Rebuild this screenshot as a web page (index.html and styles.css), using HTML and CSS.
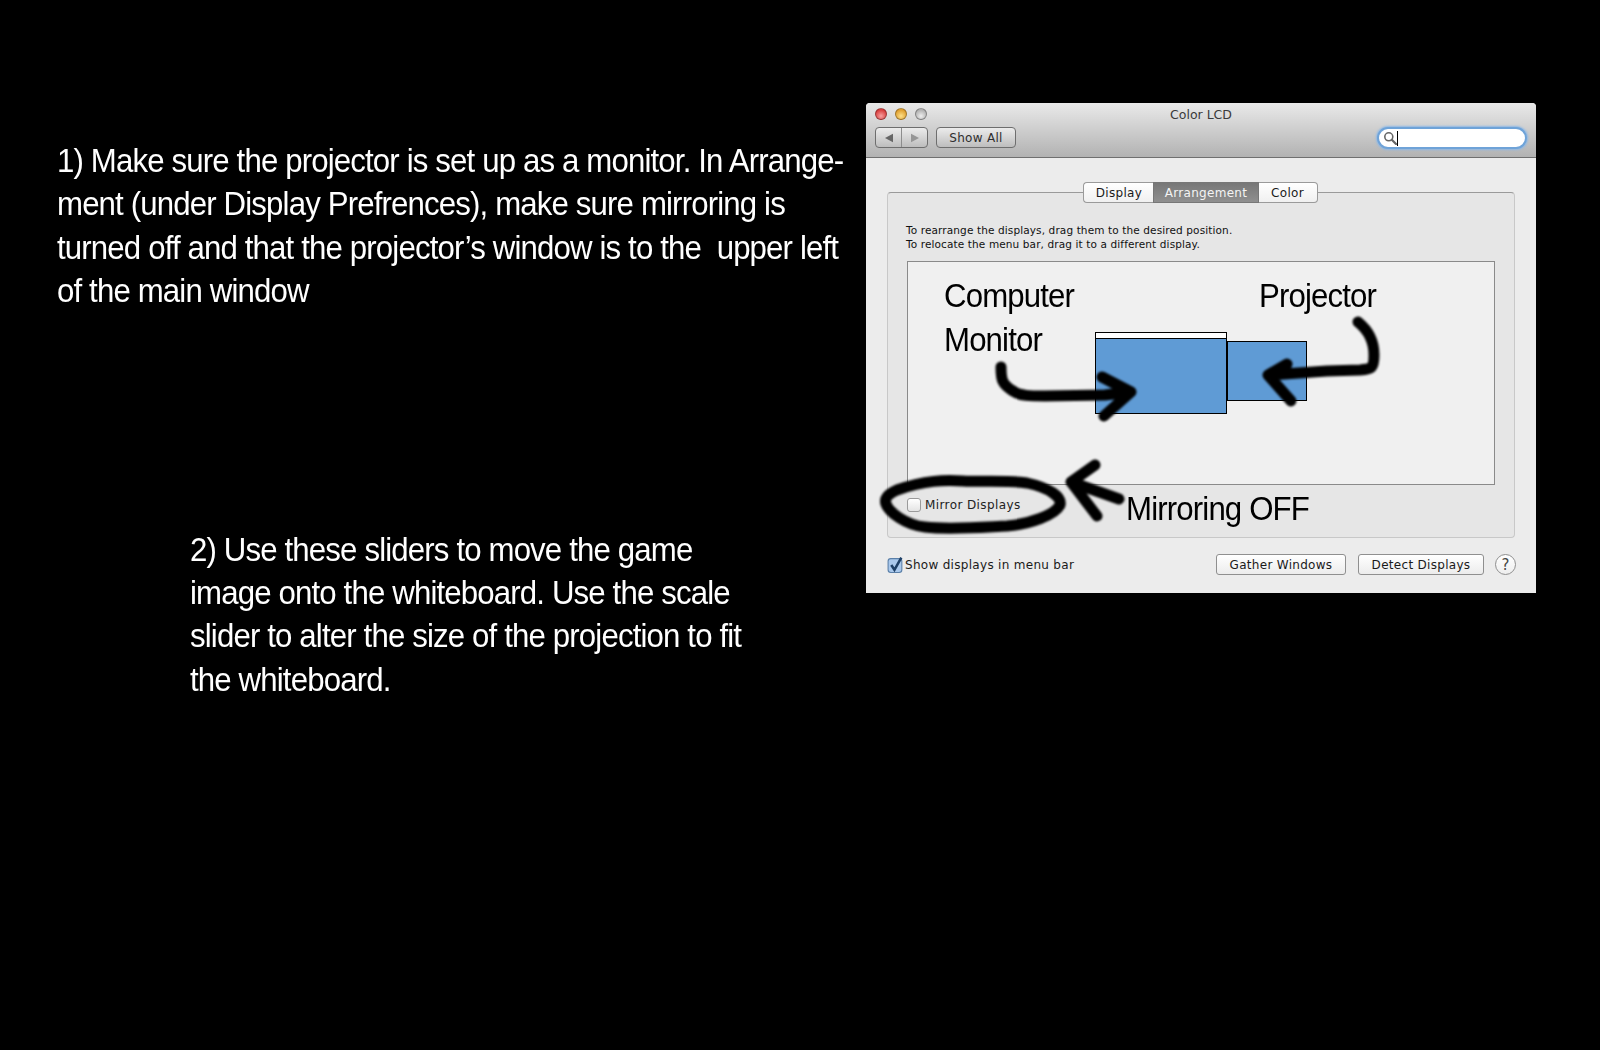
FILE: index.html
```html
<!DOCTYPE html>
<html lang="en">
<head>
<meta charset="utf-8">
<title>Projector setup</title>
<link rel="stylesheet" href="styles.css">
</head>
<body>
<main class="slide">
  <section class="notes">
    <p class="note note-one">1) Make sure the projector is set up as a monitor. In Arrange-<br>ment (under Display Prefrences), make sure mirroring is<br>turned off and that the projector’s window is to the&nbsp; upper left<br>of the main window</p>
    <p class="note note-two">2) Use these sliders to move the game<br>image onto the whiteboard. Use the scale<br>slider to alter the size of the projection to fit<br>the whiteboard.</p>
  </section>
  <section class="window">
    <header class="titlebar">
      <div class="title-row">
        <div class="lights">
          <span class="light light-red"></span>
          <span class="light light-yellow"></span>
          <span class="light light-grey"></span>
        </div>
        <span class="title">Color LCD</span>
      </div>
      <div class="tool-row">
        <div class="nav">
          <span class="nav-half"><svg class="nav-icon" viewBox="0 0 10 10"><path d="M1 5 9 .8v8.4z" fill="#666"/></svg></span>
          <span class="nav-half"><svg class="nav-icon" viewBox="0 0 10 10"><path d="M9 5 1 .8v8.4z" fill="#969696"/></svg></span>
        </div>
        <span class="show-all">Show All</span>
        <div class="search">
          <svg class="search-icon" viewBox="0 0 14 14"><circle cx="5.8" cy="5.8" r="4" fill="none" stroke="#666" stroke-width="1.6"/><path d="M8.8 8.8 13 13" stroke="#666" stroke-width="2.2" stroke-linecap="round"/></svg>
          <span class="caret"></span>
        </div>
      </div>
    </header>
    <div class="content">
      <div class="group">
        <nav class="tabs">
          <span class="tab tab-display">Display</span>
          <span class="tab tab-active">Arrangement</span>
          <span class="tab tab-color">Color</span>
        </nav>
        <p class="hint">To rearrange the displays, drag them to the desired position.<br>To relocate the menu bar, drag it to a different display.</p>
        <div class="arrange">
          <div class="display display-main"><div class="menubar"></div></div>
          <div class="display display-side"></div>
        </div>
        <label class="check check-mirror"><span class="box"></span>Mirror Displays</label>
      </div>
      <div class="footer">
        <label class="check check-menu">
          <svg class="tick" viewBox="0 0 16 17"><rect x="1" y="2.5" width="13" height="13" rx="2.5" fill="#a9c8ec" stroke="#5a7fa8"/><path d="M4 8.5 7 13 13.5 1.5" fill="none" stroke="#1d3f66" stroke-width="2.4"/></svg>
          Show displays in menu bar
        </label>
        <span class="btn btn-gather">Gather Windows</span>
        <span class="btn btn-detect">Detect Displays</span>
        <span class="help">?</span>
      </div>
    </div>
    <span class="ink-label label-computer">Computer<br>Monitor</span>
    <span class="ink-label label-projector">Projector</span>
    <span class="ink-label label-mirror">Mirroring OFF</span>
    <svg class="ink" viewBox="866 103 670 490">
      <path d="M1001 367C1001 380 1002 384 1013 391 1020 396 1030 396 1045 396L1105 395 1130 392M1102 377 1131 392 1104 416"/>
      <path d="M1358 322C1368 330 1374 342 1374 355 1374 368 1372 369 1360 370L1327 371 1270 375M1287 364 1268 375 1291 401"/>
      <path d="M963 481C945 480 925 480 897 490 888 494 884 498 886 504 889 512 905 525 925 527 950 530 985 527 1007 526 1030 524 1055 515 1060 505 1062 497 1050 488 1027 483 1005 480 985 482 963 481Z"/>
      <path d="M1095 465 1071 482 1097 516M1071 482 1119 499"/>
    </svg>
  </section>
</main>
</body>
</html>
```
FILE: styles.css
```css
* { box-sizing: border-box; }
html, body { margin: 0; height: 100%; background: #000; }
.slide {
  display: flex;
  width: 1600px;
  height: 1050px;
  overflow: hidden;
  background: #000;
}
.notes {
  width: 866px;
  flex: none;
  color: #fff;
  font-family: "Liberation Sans", Arial, sans-serif;
}
.note {
  margin: 0;
  font-size: 33px;
  line-height: 43.4px;
  letter-spacing: -0.9px;
  white-space: nowrap;
  transform: scaleX(.945);
  transform-origin: left center;
}
.note-one { margin: 139px 0 0 57px; }
.note-two { margin: 215px 0 0 190px; }

.window {
  position: relative;
  flex: none;
  width: 670px;
  height: 490px;
  margin-top: 103px;
  background: #ececec;
  border-radius: 4px 4px 0 0;
  font-family: "DejaVu Sans", "Liberation Sans", sans-serif;
  color: #1a1a1a;
}
.titlebar {
  height: 55px;
  padding: 0 9px;
  background: linear-gradient(#e9e9e9, #b2b2b2);
  border-bottom: 1px solid #6f6f6f;
  border-radius: 4px 4px 0 0;
}
.title-row {
  position: relative;
  display: flex;
  align-items: center;
  justify-content: center;
  height: 24px;
}
.lights {
  position: absolute;
  left: 0;
  top: 5px;
  display: flex;
  gap: 8px;
}
.light {
  width: 12px;
  height: 12px;
  border-radius: 50%;
  border: 1px solid rgba(0,0,0,.3);
}
.light-red { background: radial-gradient(circle at 50% 70%, #f8a0a0, #d9403f 70%); }
.light-yellow { background: radial-gradient(circle at 50% 70%, #fde08a, #e0a030 70%); }
.light-grey { background: radial-gradient(circle at 50% 70%, #eee, #b2b2b2 70%); }
.title { font-size: 12.5px; color: #3a3a3a; margin-top: -2px; }
.tool-row {
  display: flex;
  align-items: flex-start;
}
.nav, .show-all {
  height: 21px;
  border: 1px solid #6e6e6e;
  border-radius: 4px;
  background: linear-gradient(#ececec, #bdbdbd);
}
.nav {
  display: flex;
  width: 53px;
  margin-right: 8px;
}
.nav-half {
  flex: 1;
  display: flex;
  align-items: center;
  justify-content: center;
}
.nav-half + .nav-half { border-left: 1px solid #8d8d8d; }
.nav-icon { width: 10px; height: 10px; }
.show-all {
  display: flex;
  align-items: center;
  justify-content: center;
  width: 80px;
  padding-top: 1px;
  font-size: 12px;
  letter-spacing: .3px;
  color: #2e2e2e;
}
.search {
  display: flex;
  align-items: center;
  width: 150px;
  height: 22px;
  margin-left: auto;
  padding-left: 4px;
  background: #fff;
  border: 2px solid #6fa3d8;
  border-radius: 11px;
  box-shadow: 0 0 2px 1px #8db8e6;
}
.search-icon { width: 14px; height: 14px; }
.caret { width: 1px; height: 15px; background: #000; }

.content { padding: 34px 21px 0; }
.group {
  height: 346px;
  padding: 0 19px;
  background: #e6e6e6;
  border: 1px solid #c8c8c8;
  border-top-color: #9a9a9a;
  border-radius: 4px;
}
.tabs {
  display: flex;
  justify-content: center;
  height: 21px;
  margin: -11px 0 0;
  position: relative;
  left: -1px;
}
.tab {
  display: flex;
  align-items: center;
  justify-content: center;
  font-size: 12px;
  letter-spacing: .3px;
  background: linear-gradient(#fff, #f0f0f0);
  border: 1px solid #9a9a9a;
}
.tab-display { width: 70px; padding-left: 2px; border-radius: 4px 0 0 4px; border-right: 0; }
.tab-active {
  width: 106px;
  padding-left: 1px;
  color: #f4f4f4;
  background: linear-gradient(#777, #8f8f8f);
  border-color: #777;
}
.tab-color { width: 59px; border-radius: 0 4px 4px 0; border-left: 0; }
.hint {
  margin: 20px 0 0 -1px;
  font-size: 10.5px;
  line-height: 14px;
  letter-spacing: .12px;
  color: #111;
  white-space: nowrap;
}
.arrange {
  position: relative;
  width: 588px;
  height: 224px;
  margin: 10px 0 0;
  background: #f0f0f0;
  border: 1px solid #8a8a8a;
}
.display {
  position: absolute;
  background: #5f9bd5;
  border: 1px solid #000;
}
.display-main { left: 187px; top: 70px; width: 132px; height: 82px; }
.display-side { left: 319px; top: 79px; width: 80px; height: 60px; }
.menubar { height: 6px; background: #fff; border-bottom: 1px solid #000; }
.check {
  display: flex;
  align-items: center;
  font-size: 12px;
  letter-spacing: .3px;
  white-space: nowrap;
}
.box {
  width: 14px;
  height: 14px;
  margin-right: 4px;
  background: linear-gradient(#fff, #e4e4e4);
  border: 1px solid #9a9a9a;
  border-radius: 3px;
}
.check-mirror { margin-top: 13px; letter-spacing: .4px; color: #222; }
.footer {
  display: flex;
  align-items: center;
  height: 21px;
  margin-top: 16px;
}
.tick { width: 17px; height: 18px; margin-right: 1px; flex: none; }
.check-menu { width: 329px; flex: none; }
.btn {
  display: flex;
  flex: none;
  align-items: center;
  justify-content: center;
  height: 21px;
  font-size: 12px;
  letter-spacing: .3px;
  color: #1a1a1a;
  background: linear-gradient(#fff, #ececec);
  border: 1px solid #8f8f8f;
  border-radius: 3px;
}
.btn-gather { width: 130px; margin-right: 12px; }
.btn-detect { width: 126px; margin-right: 11px; }
.help {
  display: flex;
  align-items: center;
  justify-content: center;
  width: 21px;
  height: 21px;
  flex: none;
  font-size: 15px;
  color: #444;
  background: linear-gradient(#fff, #eee);
  border: 1px solid #8f8f8f;
  border-radius: 50%;
}
.ink-label {
  position: absolute;
  font-family: "Liberation Sans", Arial, sans-serif;
  font-size: 33px;
  line-height: 44px;
  letter-spacing: -0.9px;
  color: #000;
  white-space: nowrap;
  transform: scaleX(.945);
  transform-origin: left center;
}
.label-computer { left: 78px; top: 171px; }
.label-projector { left: 393px; top: 171px; }
.label-mirror { left: 260px; top: 384px; }
.ink {
  position: absolute;
  left: 0;
  top: 0;
  width: 670px;
  height: 490px;
  fill: none;
  stroke: #000;
  stroke-width: 11;
  stroke-linecap: round;
  stroke-linejoin: round;
  filter: blur(1px);
  pointer-events: none;
}
```
